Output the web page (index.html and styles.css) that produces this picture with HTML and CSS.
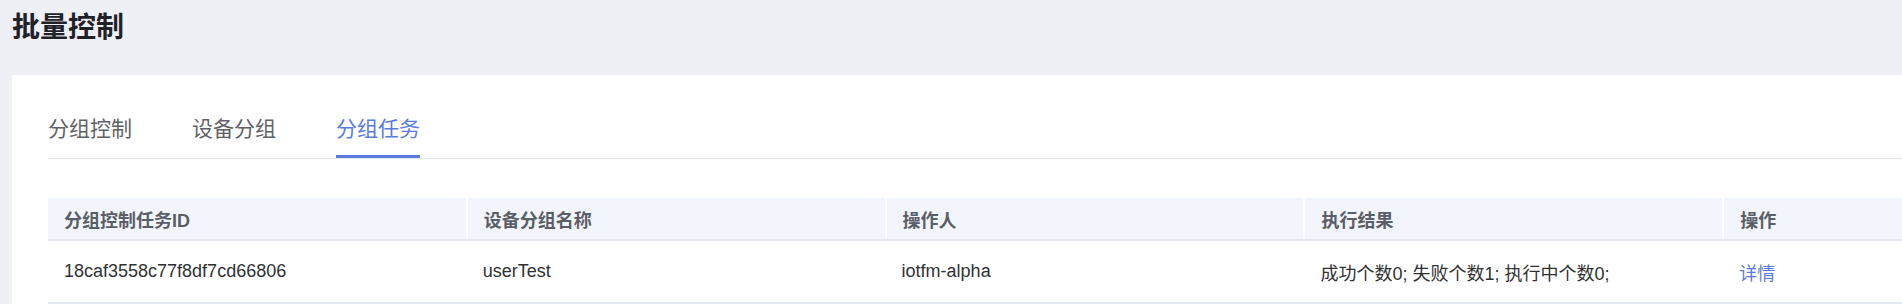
FILE: index.html
```html
<!DOCTYPE html>
<html lang="zh-CN">
<head>
  <meta charset="UTF-8" />
  <meta name="viewport" content="width=device-width, initial-scale=1.0"/>
  <title>批量控制</title>
  <link rel="stylesheet" href="styles.css">
</head>
<body>
  <div class="page">
    <h1>批量控制</h1>
    <div class="card">
      <div class="tabs">
        <div class="tab">分组控制</div>
        <div class="tab">设备分组</div>
        <div class="tab active">分组任务</div>
      </div>
      <table class="task-table">
        <thead>
          <tr>
            <th>分组控制任务ID</th>
            <th>设备分组名称</th>
            <th>操作人</th>
            <th>执行结果</th>
            <th>操作</th>
          </tr>
        </thead>
        <tbody>
          <tr>
            <td>18caf3558c77f8df7cd66806</td>
            <td>userTest</td>
            <td>iotfm-alpha</td>
            <td>成功个数0; 失败个数1; 执行中个数0;</td>
            <td><a class="link" href="#">详情</a></td>
          </tr>
        </tbody>
      </table>
    </div>
  </div>
</body>
</html>
```

FILE: styles.css
```css
* {
  box-sizing: border-box;
}

html, body {
  overflow: hidden;
}

body {
  margin: 0;
  font-family: "Liberation Sans", "Noto Sans CJK SC", sans-serif;
  background: #eef0f5;
  color: #303133;
}

.page {
  padding: 7px 0 0 12px;
}

h1 {
  margin: 0 0 26px;
  font-size: 28px;
  line-height: 42px;
  font-weight: 700;
  color: #1f2227;
}

.card {
  background: #fff;
  width: 2200px;
  padding: 34px 36px 0;
}

.tabs {
  display: flex;
  gap: 60px;
  width: 2095px;
  border-bottom: 1px solid #e4e7ed;
}

.tab {
  font-size: 21px;
  line-height: 40px;
  padding-bottom: 6px;
  border-bottom: 3px solid transparent;
  color: #606266;
}

.tab.active {
  color: #5a7be0;
  border-bottom-color: #5a7be0;
}

.task-table {
  margin-top: 39px;
  width: 2095px;
  table-layout: fixed;
  border-collapse: collapse;
  font-size: 18px;
}

.task-table th,
.task-table td {
  text-align: left;
  padding: 0 16px;
  white-space: nowrap;
}

.task-table th {
  height: 42px;
  background: #f2f5fc;
  color: #5a5e66;
  font-weight: 700;
  border-right: 2px solid #fff;
  border-bottom: 2px solid #e4e7ed;
}

.task-table td {
  height: 63px;
  color: #303133;
  border-bottom: 2px solid #e4e7ed;
}

.link {
  color: #5a7be0;
  text-decoration: none;
}
```
